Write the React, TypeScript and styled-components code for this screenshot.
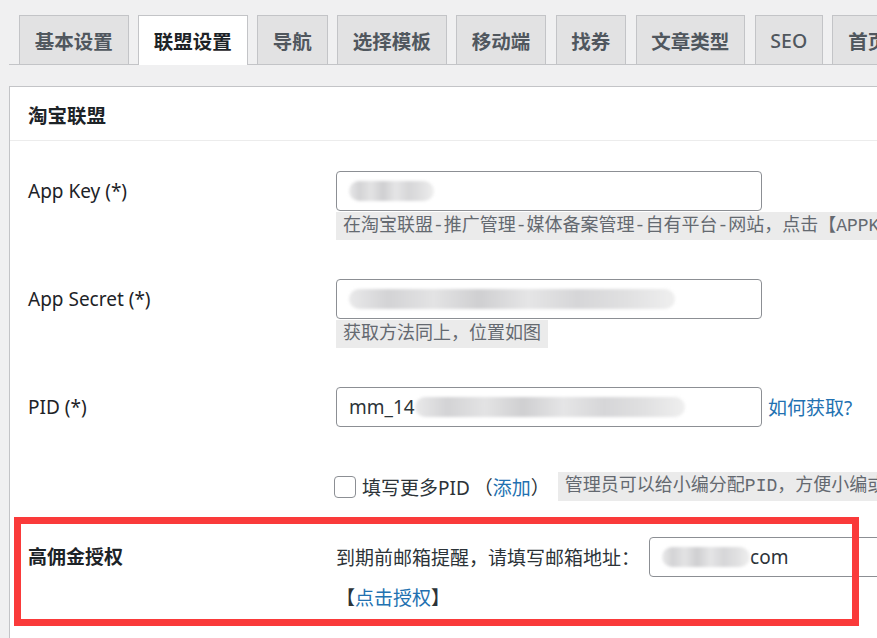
import styled, { createGlobalStyle } from 'styled-components';

const GlobalStyle = createGlobalStyle`
  html, body {
    margin: 0;
    padding: 0;
    background: #f0f0f1;
    overflow: hidden;
  }
  body {
    font-family: "Noto Sans", "Noto Sans CJK SC", sans-serif;
    color: #1d2327;
  }
`;

const tabs = ['基本设置', '联盟设置', '导航', '选择模板', '移动端', '找券', '文章类型', 'SEO', '首页设置'];

const App = () => {
    return (
        <>
            <GlobalStyle />
            <Page>
                <TabBar>
                    {tabs.map((t) => (
                        <Tab key={t} $active={t === '联盟设置'} $latin={t === 'SEO'}>{t}</Tab>
                    ))}
                </TabBar>

                <Card>
                    <CardHeader>淘宝联盟</CardHeader>
                    <CardBody>
                        <Row>
                            <Label>App Key (*)</Label>
                            <Field>
                                <TextBox>
                                    <Redaction $w={85} />
                                </TextBox>
                                <Hint>在淘宝联盟-推广管理-媒体备案管理-自有平台-网站，点击【APPKEY】查看</Hint>
                            </Field>
                        </Row>

                        <Row>
                            <Label>App Secret (*)</Label>
                            <Field>
                                <TextBox>
                                    <Redaction $w={326} />
                                </TextBox>
                                <Hint>获取方法同上，位置如图</Hint>
                            </Field>
                        </Row>

                        <Row>
                            <Label>PID (*)</Label>
                            <Field>
                                <InputLine>
                                    <TextBox>
                                        mm_14<Redaction $w={270} />
                                    </TextBox>
                                    <LinkText>如何获取?</LinkText>
                                </InputLine>
                            </Field>
                        </Row>

                        <ExtraRow>
                            <span />
                            <CheckLine>
                                <Checkbox />
                                <CheckText>填写更多PID</CheckText>
                                <Paren>（<LinkText>添加</LinkText>）</Paren>
                                <Hint $inline>管理员可以给小编分配PID，方便小编或作者推广赚取佣金</Hint>
                            </CheckLine>
                        </ExtraRow>

                        <HighlightRow>
                            <Label $bold>高佣金授权</Label>
                            <Field>
                                <InputLine>
                                    <PlainText>到期前邮箱提醒，请填写邮箱地址：</PlainText>
                                    <TextBox $width={320}>
                                        <Redaction $w={88} />com
                                    </TextBox>
                                </InputLine>
                                <AuthLine>
                                    【<LinkText>点击授权</LinkText>】
                                </AuthLine>
                            </Field>
                        </HighlightRow>
                    </CardBody>
                </Card>
            </Page>
        </>
    );
};

export default App;

// Styled Components
const Page = styled.div`
    width: 1200px;
    height: 638px;
    padding: 15px 0 0 9px;
    box-sizing: border-box;
`;

const TabBar = styled.nav`
    display: flex;
    align-items: flex-end;
    gap: 9.5px;
    height: 49px;
    padding-left: 10px;
    border-bottom: 1px solid #c3c4c7;
`;

interface TabProps {
    $active: boolean;
    $latin?: boolean;
}

const Tab = styled.div<TabProps>`
    box-sizing: border-box;
    height: ${(props) => (props.$active ? '50px' : '49px')};
    margin-bottom: ${(props) => (props.$active ? '-1px' : '0')};
    padding: 0 14.75px;
    display: flex;
    align-items: center;
    border: 1px solid #c3c4c7;
    border-bottom: none;
    background: ${(props) => (props.$active ? '#ffffff' : '#e2e2e3')};
    color: ${(props) => (props.$active ? '#1d2327' : '#50575e')};
    font-size: 19.5px;
    font-weight: ${(props) => (props.$latin ? 500 : 700)};
    white-space: nowrap;
    flex-shrink: 0;
`;

const Card = styled.div`
    margin-top: 21px;
    height: 560px;
    background: #ffffff;
    border: 1px solid #c3c4c7;
    border-right: none;
    border-bottom: none;
`;

const CardHeader = styled.div`
    box-sizing: border-box;
    height: 54px;
    padding: 2px 0 0 18px;
    display: flex;
    align-items: center;
    border-bottom: 1px solid #ececec;
    font-size: 19.5px;
    font-weight: 700;
`;

const CardBody = styled.div`
    padding-top: 10px;
`;

const Row = styled.div`
    display: grid;
    grid-template-columns: 308px 1fr;
    align-items: start;
    padding: 20px 0 19px 18px;
`;

const ExtraRow = styled(Row)`
    padding: 26px 0 16px 18px;
`;

const HighlightRow = styled(Row)`
    position: relative;
    padding: 20px 0 15px 18px;

    &::after {
        content: '';
        position: absolute;
        left: 4px;
        top: 0;
        bottom: 0;
        width: 845px;
        box-sizing: border-box;
        border: 7px solid #fa3a3a;
        pointer-events: none;
    }
`;

interface LabelProps {
    $bold?: boolean;
}

const Label = styled.div<LabelProps>`
    line-height: 40px;
    font-size: 19px;
    font-weight: ${(props) => (props.$bold ? 700 : 400)};
    color: #1d2327;
    white-space: nowrap;
`;

const Field = styled.div`
    display: flex;
    flex-direction: column;
    align-items: flex-start;
    min-width: 0;
`;

const InputLine = styled.div`
    display: flex;
    align-items: center;
    height: 40px;
    white-space: nowrap;
`;

interface TextBoxProps {
    $width?: number;
}

const TextBox = styled.div<TextBoxProps>`
    box-sizing: border-box;
    width: ${(props) => props.$width ?? 426}px;
    height: 40px;
    padding: 0 12px;
    display: flex;
    align-items: center;
    flex-shrink: 0;
    border: 1px solid #8c8f94;
    border-radius: 4px;
    background: #ffffff;
    font-size: 19px;
    color: #2c3338;
    white-space: nowrap;
    overflow: hidden;

    & + a,
    & + span {
        margin-left: 6px;
    }
`;

interface RedactionProps {
    $w: number;
}

const Redaction = styled.span<RedactionProps>`
    display: inline-block;
    width: ${(props) => props.$w}px;
    height: 20px;
    border-radius: 10px;
    background: linear-gradient(
        90deg,
        #e9e9ea 0%,
        #d3d3d5 12%,
        #e3e3e4 26%,
        #cfcfd1 40%,
        #e5e5e6 55%,
        #d6d6d8 70%,
        #e0e0e1 85%,
        #efefef 100%
    );
    filter: blur(1.5px);
`;

interface HintProps {
    $inline?: boolean;
}

const Hint = styled.code<HintProps>`
    display: inline-block;
    margin-top: ${(props) => (props.$inline ? '0' : '1px')};
    margin-left: ${(props) => (props.$inline ? '8px' : '0')};
    height: ${(props) => (props.$inline ? '29px' : '28px')};
    line-height: ${(props) => (props.$inline ? '29px' : '28px')};
    padding: 0 7px;
    background: #ebebeb;
    color: #646970;
    font-family: "Liberation Mono", "Noto Sans CJK SC", monospace;
    font-size: 18px;
    white-space: nowrap;
`;

const LinkText = styled.span`
    color: #2271b1;
    font-size: 19px;
    cursor: pointer;
`;

const CheckLine = styled.div`
    display: flex;
    align-items: center;
    height: 29px;
    margin-left: -2px;
    white-space: nowrap;
`;

const Checkbox = styled.span`
    box-sizing: border-box;
    width: 22px;
    height: 22px;
    flex-shrink: 0;
    border: 1px solid #8c8f94;
    border-radius: 4px;
    background: #ffffff;
`;

const CheckText = styled.span`
    margin-left: 6px;
    font-size: 19px;
    color: #2c3338;
`;

const Paren = styled.span`
    margin-left: 4px;
    font-size: 19px;
    color: #2c3338;
`;

const PlainText = styled.span`
    font-size: 19px;
    color: #2c3338;

    & + div {
        margin-left: 9px;
    }
`;

const AuthLine = styled.div`
    margin-top: 8px;
    line-height: 26px;
    font-size: 19px;
    color: #2c3338;
    white-space: nowrap;
`;
